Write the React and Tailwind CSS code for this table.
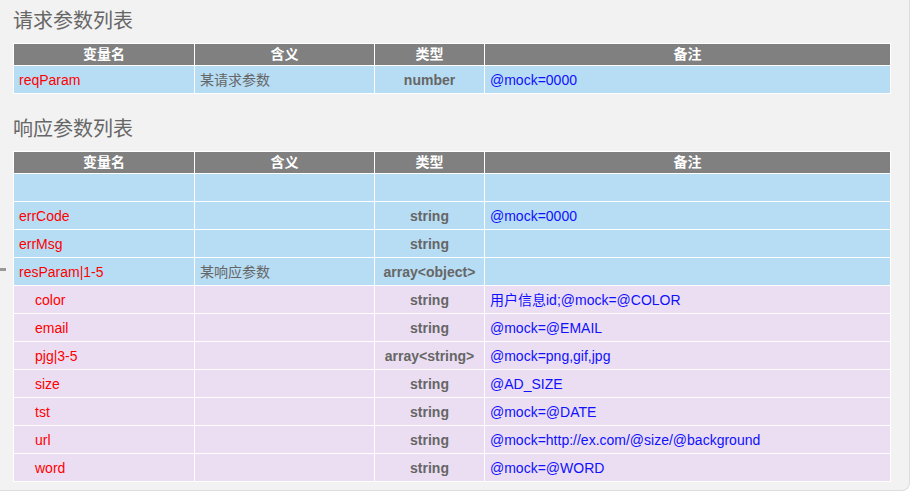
import React from "react";

const FONT = { fontFamily: '"Liberation Sans", Arial, "Noto Sans CJK SC", sans-serif' };

const REQ = [{ name: "reqParam", desc: "某请求参数", type: "number", note: "@mock=0000" }];

const RES = [
  { name: "", desc: "", type: "", note: "" },
  { name: "errCode", desc: "", type: "string", note: "@mock=0000" },
  { name: "errMsg", desc: "", type: "string", note: "" },
  { name: "resParam|1-5", desc: "某响应参数", type: "array<object>", note: "" },
  { name: "color", child: true, type: "string", note: "用户信息id;@mock=@COLOR" },
  { name: "email", child: true, type: "string", note: "@mock=@EMAIL" },
  { name: "pjg|3-5", child: true, type: "array<string>", note: "@mock=png,gif,jpg" },
  { name: "size", child: true, type: "string", note: "@AD_SIZE" },
  { name: "tst", child: true, type: "string", note: "@mock=@DATE" },
  { name: "url", child: true, type: "string", note: "@mock=http://ex.com/@size/@background" },
  { name: "word", child: true, type: "string", note: "@mock=@WORD" },
];

function ParamTable({ rows }) {
  return (
    <table className="w-[878px] table-fixed border-collapse border border-white text-[14px]">
      <colgroup>
        <col className="w-[181px]" />
        <col className="w-[180px]" />
        <col className="w-[110px]" />
        <col />
      </colgroup>
      <thead>
        <tr className="h-[22px] bg-[#808080] text-white font-bold">
          <th className="border border-white p-0 leading-[19px]">变量名</th>
          <th className="border border-white p-0 leading-[19px]">含义</th>
          <th className="border border-white p-0 leading-[19px]">类型</th>
          <th className="border border-white p-0 leading-[19px]">备注</th>
        </tr>
      </thead>
      <tbody>
        {rows.map((r, i) => (
          <tr key={i} className={`h-[28px] ${r.child ? "bg-[#ebdef2]" : "bg-[#b7ddf4]"}`}>
            <td className={`border border-white pt-[1px] pb-0 pr-1 text-[#ff0000] ${r.child ? "pl-[21px]" : "pl-[5px]"}`}>{r.name}</td>
            <td className="border border-white pt-[1px] pb-0 px-[5px] text-[#666666]">{r.desc}</td>
            <td className="border border-white pt-[1px] pb-0 px-0 text-center font-bold text-[#666666]">{r.type}</td>
            <td className="border border-white pt-[1px] pb-0 px-[5px] text-[#1010ff]">{r.note}</td>
          </tr>
        ))}
      </tbody>
    </table>
  );
}

export default function App() {
  return (
    <div className="w-[918px] h-[500px] bg-white relative" style={FONT}>
      <div className="w-[910px] h-[491px] bg-[#f2f2f2] border-r border-b border-[#dddddd] rounded-br-[8px] pl-[13px] pt-[5px]">
        <h2 className="text-[20px] leading-[32px] text-[#666666] mb-[6px]">请求参数列表</h2>
        <ParamTable rows={REQ} />
        <h2 className="text-[20px] leading-[32px] text-[#666666] mt-[19px] mb-[6px]">响应参数列表</h2>
        <ParamTable rows={RES} />
      </div>
      <div className="absolute left-0 top-[268px] w-[6px] h-[3px] bg-[#999999]" />
    </div>
  );
}
